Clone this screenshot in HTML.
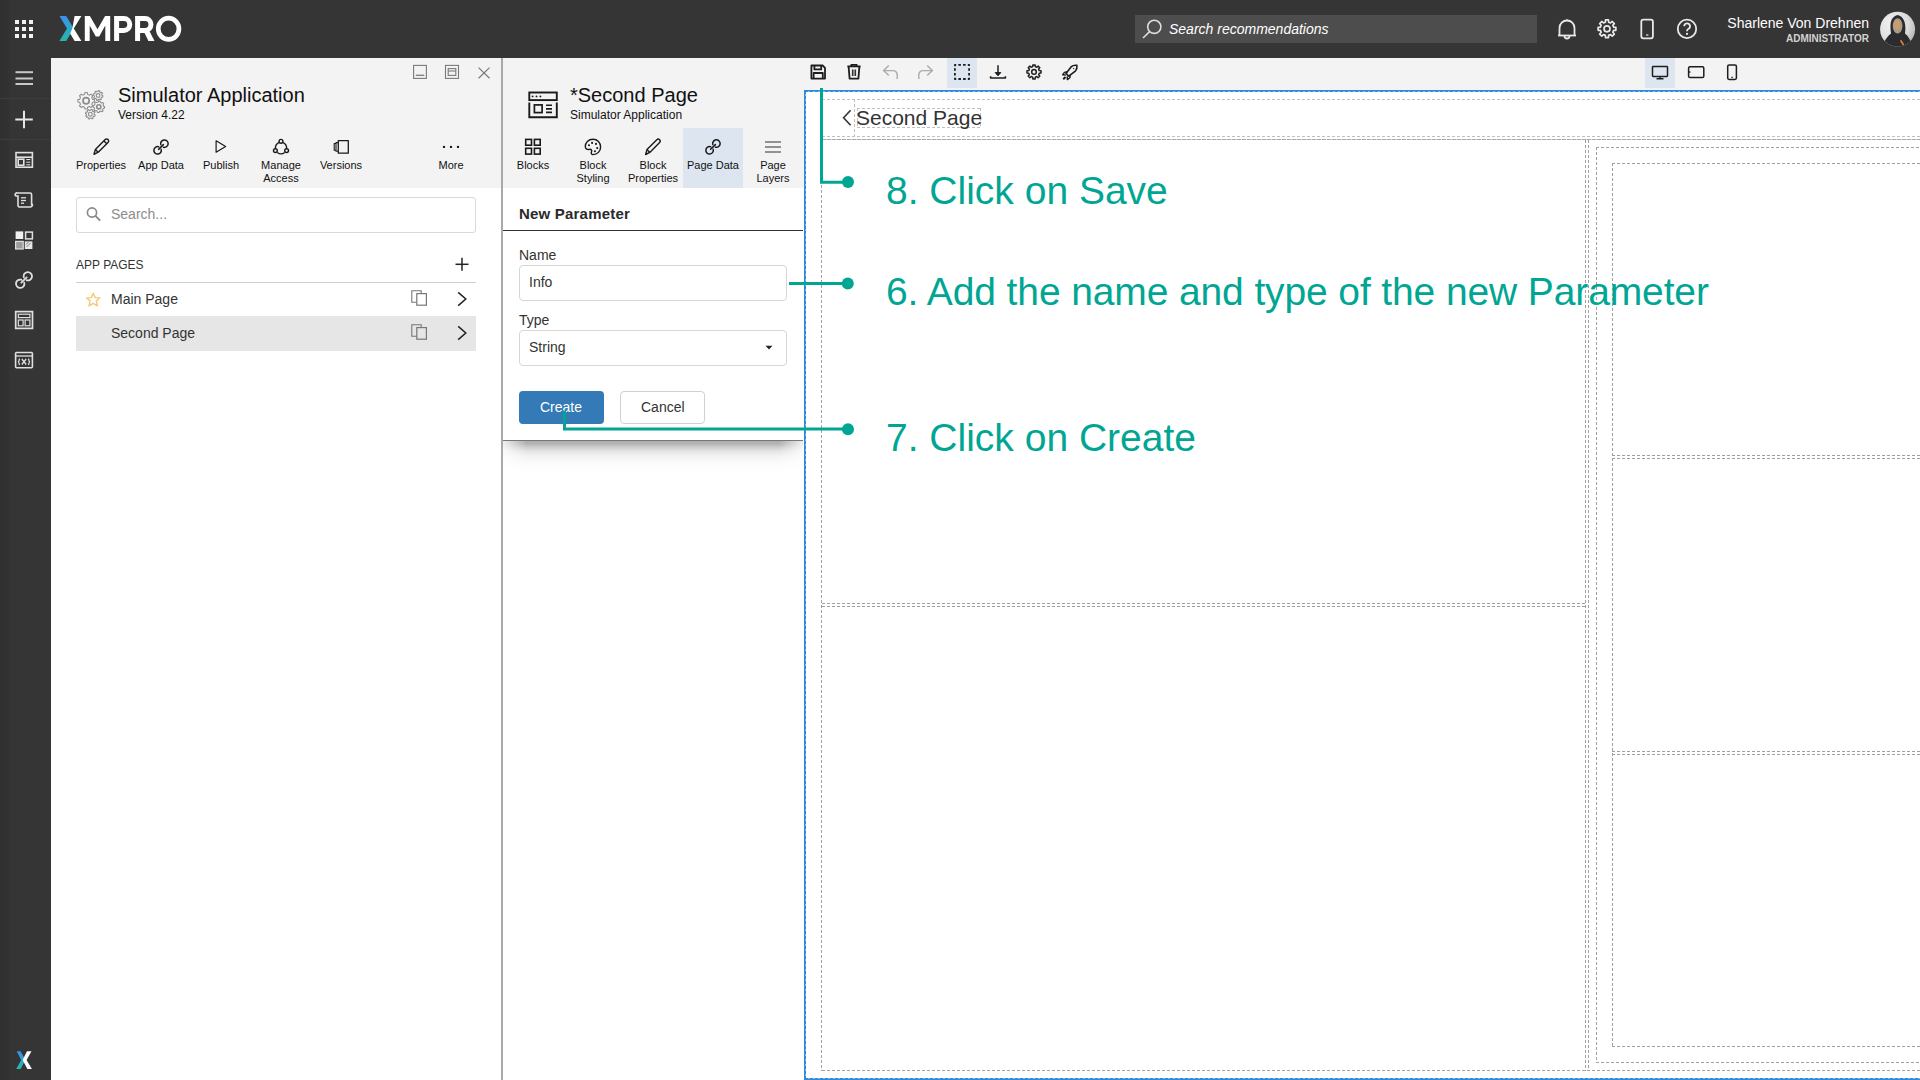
<!DOCTYPE html>
<html><head><meta charset="utf-8">
<style>
*{box-sizing:border-box;margin:0;padding:0}
html,body{width:1920px;height:1080px;overflow:hidden;background:#fff;font-family:"Liberation Sans",sans-serif;color:#222}
.a{position:absolute;white-space:nowrap}
#top{left:0;top:0;width:1920px;height:58px;background:#353535}
#side{left:0;top:58px;width:51px;height:1022px;background:#353535}
#p1h{left:51px;top:58px;width:450px;height:130px;background:#f3f3f3}
#p2h{left:503px;top:58px;width:301px;height:130px;background:#f3f3f3}
#sep{left:501px;top:58px;width:2px;height:1022px;background:#a9a9a9}
#tb{left:803px;top:58px;width:1117px;height:32px;background:#f3f3f3}
.lbl{font-size:11px;color:#111;text-align:center;width:60px;line-height:13px}
.ann{font-size:39px;color:#00a693;line-height:45px}
.dh{height:1px;background:repeating-linear-gradient(to right,#c0c0c0 0 3px,transparent 3px 5px)}
.dv{width:1px;background:repeating-linear-gradient(to bottom,#c0c0c0 0 3px,transparent 3px 5px)}
.dk.dh{background:repeating-linear-gradient(to right,#a0a0a0 0 3px,transparent 3px 5px)}
.dk.dv{background:repeating-linear-gradient(to bottom,#a0a0a0 0 3px,transparent 3px 5px)}
</style></head>
<body>
<div class="a" id="top"></div>
<div class="a" id="side"></div>
<div class="a" style="left:0;top:0;width:12px;height:1080px;background:linear-gradient(to right,rgba(0,0,0,.09) 0,rgba(0,0,0,.09) 6px,rgba(0,0,0,0) 12px)"></div>
<div class="a" style="left:0;top:98px;width:51px;height:1px;background:#3b3b44"></div>
<div class="a" style="left:0;top:139px;width:51px;height:1px;background:#3b3b44"></div>
<div class="a" id="p1h"></div>
<div class="a" id="p2h"></div>
<div class="a" id="sep"></div>
<div class="a" id="tb"></div>

<!-- ===== panel1 header text ===== -->
<div class="a" style="left:118px;top:84px;font-size:20px;color:#111">Simulator Application</div>
<div class="a" style="left:118px;top:108px;font-size:12px;color:#111">Version 4.22</div>

<div class="a lbl" style="left:71px;top:159px">Properties</div>
<div class="a lbl" style="left:131px;top:159px">App Data</div>
<div class="a lbl" style="left:191px;top:159px">Publish</div>
<div class="a lbl" style="left:251px;top:159px">Manage<br>Access</div>
<div class="a lbl" style="left:311px;top:159px">Versions</div>
<div class="a lbl" style="left:421px;top:159px">More</div>

<!-- search -->
<div class="a" style="left:76px;top:197px;width:400px;height:36px;border:1px solid #d9d9d9;border-radius:3px;background:#fff"></div>
<div class="a" style="left:111px;top:206px;font-size:14px;color:#8c8c8c">Search...</div>
<div class="a" style="left:76px;top:258px;font-size:12px;color:#333">APP PAGES</div>
<div class="a" style="left:76px;top:282px;width:400px;height:1px;background:#cfcfcf"></div>
<div class="a" style="left:76px;top:316px;width:400px;height:35px;background:#e6e6e6"></div>
<div class="a" style="left:111px;top:291px;font-size:14px;color:#333">Main Page</div>
<div class="a" style="left:111px;top:325px;font-size:14px;color:#333">Second Page</div>

<!-- ===== panel2 header ===== -->
<div class="a" style="left:570px;top:84px;font-size:20px;color:#111">*Second Page</div>
<div class="a" style="left:570px;top:108px;font-size:12px;color:#111">Simulator Application</div>
<div class="a" style="left:683px;top:128px;width:60px;height:60px;background:#dde6f0"></div>
<div class="a lbl" style="left:503px;top:159px">Blocks</div>
<div class="a lbl" style="left:563px;top:159px">Block<br>Styling</div>
<div class="a lbl" style="left:623px;top:159px">Block<br>Properties</div>
<div class="a lbl" style="left:683px;top:159px">Page Data</div>
<div class="a lbl" style="left:743px;top:159px">Page<br>Layers</div>

<!-- ===== form ===== -->
<div class="a" style="left:503px;top:441px;width:300px;height:30px;background:linear-gradient(to bottom,rgba(0,0,0,.32) 0,rgba(0,0,0,.29) 3px,rgba(0,0,0,.2) 6px,rgba(0,0,0,.11) 10px,rgba(0,0,0,.05) 15px,rgba(0,0,0,.015) 22px,rgba(0,0,0,0) 30px);-webkit-mask-image:linear-gradient(to right,rgba(0,0,0,.2),#000 24px,#000 276px,rgba(0,0,0,.2))"></div>
<div class="a" style="left:503px;top:440px;width:300px;height:1px;background:#777"></div>
<div class="a" style="left:519px;top:205px;font-size:15px;font-weight:bold;color:#2a2a2a;letter-spacing:.2px">New Parameter</div>
<div class="a" style="left:503px;top:230px;width:300px;height:1px;background:#333"></div>
<div class="a" style="left:519px;top:247px;font-size:14px;color:#333">Name</div>
<div class="a" style="left:519px;top:265px;width:268px;height:36px;border:1px solid #d6d6d6;border-radius:4px"></div>
<div class="a" style="left:529px;top:274px;font-size:14px;color:#333">Info</div>
<div class="a" style="left:519px;top:312px;font-size:14px;color:#333">Type</div>
<div class="a" style="left:519px;top:330px;width:268px;height:36px;border:1px solid #d6d6d6;border-radius:4px"></div>
<div class="a" style="left:529px;top:339px;font-size:14px;color:#333">String</div>
<div class="a" style="left:519px;top:391px;width:85px;height:33px;background:#337ab7;border-radius:4px"></div>
<div class="a" style="left:540px;top:399px;font-size:14px;color:#fff">Create</div>
<div class="a" style="left:620px;top:391px;width:85px;height:33px;border:1px solid #d0d0d0;border-radius:4px"></div>
<div class="a" style="left:641px;top:399px;font-size:14px;color:#333">Cancel</div>

<!-- ===== canvas ===== -->
<div class="a" style="left:804px;top:90px;width:1116px;height:990px;border-left:1px solid #2b8ae4;border-top:1px solid #2b8ae4;border-bottom:1px solid #2b8ae4"></div>
<div class="a" style="left:805px;top:91px;width:1115px;height:1px;background:repeating-linear-gradient(to right,#2b8ae4 0 3px,#8cb6dd 3px 5px)"></div>
<div class="a" style="left:805px;top:91px;width:1px;height:987px;background:repeating-linear-gradient(to bottom,#2b8ae4 0 3px,#8cb6dd 3px 5px)"></div>
<div class="a" style="left:805px;top:1078px;width:1115px;height:1px;background:repeating-linear-gradient(to right,#2b8ae4 0 3px,#8cb6dd 3px 5px)"></div>

<div class="a dh" style="left:822px;top:99px;width:1098px"></div>
<div class="a dh" style="left:822px;top:136px;width:1098px"></div>
<div class="a dv" style="left:854px;top:99px;height:38px"></div>
<div class="a dh" style="left:857px;top:108px;width:124px"></div>
<div class="a dh" style="left:857px;top:127px;width:124px"></div>
<div class="a dv" style="left:857px;top:108px;height:20px"></div>
<div class="a dv" style="left:980px;top:108px;height:20px"></div>
<div class="a" style="left:822px;top:139px;width:1098px;height:1px;background:repeating-linear-gradient(to right,#aaa 0 4px,#e2e2e2 4px 5px)"></div>
<div class="a dk dv" style="left:821px;top:140px;height:931px"></div>
<div class="a dk dh" style="left:822px;top:603px;width:763px"></div>
<div class="a dk dh" style="left:822px;top:606px;width:763px"></div>
<div class="a dk dh" style="left:822px;top:1070px;width:1098px"></div>
<div class="a dk dv" style="left:1585px;top:140px;height:931px"></div>
<div class="a dk dv" style="left:1588px;top:140px;height:931px"></div>
<div class="a dk dv" style="left:1596px;top:147px;height:916px"></div>
<div class="a dk dh" style="left:1596px;top:147px;width:324px"></div>
<div class="a dk dh" style="left:1596px;top:1062px;width:324px"></div>
<div class="a dk dv" style="left:1612px;top:163px;height:884px"></div>
<div class="a dk dh" style="left:1612px;top:163px;width:308px"></div>
<div class="a dk dh" style="left:1612px;top:455px;width:308px"></div>
<div class="a dk dh" style="left:1612px;top:458px;width:308px"></div>
<div class="a dk dh" style="left:1612px;top:751px;width:308px"></div>
<div class="a dk dh" style="left:1612px;top:754px;width:308px"></div>
<div class="a dk dh" style="left:1612px;top:1046px;width:308px"></div>

<div class="a" style="left:856px;top:106px;font-size:21px;color:#333">Second Page</div>

<!-- ===== annotations ===== -->
<div class="a ann" style="left:886px;top:168px">8. Click on Save</div>
<div class="a ann" style="left:886px;top:269px;letter-spacing:-.12px">6. Add the name and type of the new Parameter</div>
<div class="a ann" style="left:886px;top:415px">7. Click on Create</div>

<!-- ===== top bar ===== -->
<div class="a" style="left:1135px;top:15px;width:402px;height:28px;background:#4d4d4d"></div>
<div class="a" style="left:1169px;top:21px;font-size:14px;font-style:italic;color:#fff">Search recommendations</div>
<div class="a" style="right:51px;top:15px;font-size:14px;color:#fff">Sharlene Von Drehnen</div>
<div class="a" style="right:51px;top:33px;font-size:10px;font-weight:bold;color:#d2d2d2">ADMINISTRATOR</div>

<!-- ===== icons & lines overlay ===== -->
<svg class="a" style="left:0;top:0" width="1920" height="1080" viewBox="0 0 1920 1080" fill="none">
 <!-- grid -->
 <g fill="#f2f2f2">
  <rect x="15" y="20" width="4" height="4"/><rect x="22" y="20" width="4" height="4"/><rect x="29" y="20" width="4" height="4"/>
  <rect x="15" y="27" width="4" height="4"/><rect x="22" y="27" width="4" height="4"/><rect x="29" y="27" width="4" height="4"/>
  <rect x="15" y="34" width="4" height="4"/><rect x="22" y="34" width="4" height="4"/><rect x="29" y="34" width="4" height="4"/>
 </g>
 <!-- logo -->
 <defs>
  <linearGradient id="xg" x1="0" y1="0" x2="0" y2="1">
   <stop offset="0" stop-color="#3d8fe9"/><stop offset=".55" stop-color="#2aa9c8"/><stop offset="1" stop-color="#27b7a6"/>
  </linearGradient>
 </defs>
 <polygon points="59.4,16.1 66.2,16.1 73.8,28.6 66.2,41.1 59.4,41.1 67,28.6" fill="url(#xg)"/>
 <polygon points="74.6,16.1 81.4,16.1 73.8,28.6 81.4,41.1 74.6,41.1 70.2,33.5 72.3,28.6" fill="#fff"/>
 <polygon points="84.8,41.1 84.8,16.1 89.9,16.1 97.5,29.2 105.1,16.1 110.2,16.1 110.2,41.1 105.3,41.1 105.3,25.5 99.2,36.6 95.8,36.6 89.7,25.5 89.7,41.1" fill="#fff"/>
 <path d="M116.6,41.1 V18.6 H123.8 A5.95,5.95 0 0 1 123.8,30.5 H116.6" stroke="#fff" stroke-width="5"/>
 <path d="M137.6,41.1 V18.6 H145 A5.95,5.95 0 0 1 145,30.5 H137.6" stroke="#fff" stroke-width="5"/>
 <polygon points="143.6,31 149.4,31 154.5,41.1 148.4,41.1" fill="#fff"/>
 <ellipse cx="168.6" cy="28.8" rx="10.35" ry="10.65" stroke="#fff" stroke-width="4.7"/>

 <!-- search magnifier -->
 <circle cx="1154.3" cy="26.8" r="6.6" stroke="#ddd" stroke-width="1.6"/>
 <line x1="1149.6" y1="31.6" x2="1143" y2="38" stroke="#ddd" stroke-width="1.6"/>

 <!-- bell -->
 <g stroke="#e8e8e8" stroke-width="1.8">
  <path d="M1558,35.5 H1576"/>
  <path d="M1559.5,35.5 V28 A7.5,7.5 0 0 1 1574.5,28 V35.5"/>
  <path d="M1564.5,36 A2.5,2.5 0 0 0 1569.5,36"/>
  <line x1="1567" y1="19.5" x2="1567" y2="21"/>
 </g>
 <!-- gear top -->
 <g stroke="#e8e8e8" stroke-width="1.8">
  <path d="M1605.36,22.20 L1605.52,19.92 L1608.48,19.92 L1608.64,22.20 L1610.51,22.97 L1612.23,21.48 L1614.32,23.57 L1612.83,25.29 L1613.60,27.16 L1615.88,27.32 L1615.88,30.28 L1613.60,30.44 L1612.83,32.31 L1614.32,34.03 L1612.23,36.12 L1610.51,34.63 L1608.64,35.40 L1608.48,37.68 L1605.52,37.68 L1605.36,35.40 L1603.49,34.63 L1601.77,36.12 L1599.68,34.03 L1601.17,32.31 L1600.40,30.44 L1598.12,30.28 L1598.12,27.32 L1600.40,27.16 L1601.17,25.29 L1599.68,23.57 L1601.77,21.48 L1603.49,22.97 Z" stroke-linejoin="round" stroke-width="1.7"/>
  <circle cx="1607" cy="28.8" r="3" stroke-width="1.7"/>
 </g>
 <!-- phone top -->
 <rect x="1641.3" y="19.7" width="11.6" height="18.6" rx="2" stroke="#e8e8e8" stroke-width="1.8"/>
 <line x1="1646" y1="35" x2="1648.4" y2="35" stroke="#e8e8e8" stroke-width="1.2"/>
 <!-- help -->
 <circle cx="1687" cy="28.9" r="9.2" stroke="#e8e8e8" stroke-width="1.8"/>
 <path d="M1684.2,26.3 A2.9,2.9 0 1 1 1688.2,29 C1687.3,29.5 1687,30 1687,31.3" stroke="#e8e8e8" stroke-width="1.8"/>
 <circle cx="1687" cy="33.9" r="1.1" fill="#e8e8e8"/>
 <!-- avatar -->
 <defs>
  <radialGradient id="avbg" cx=".3" cy=".35" r=".85"><stop offset="0" stop-color="#f0f0f0"/><stop offset=".6" stop-color="#dcdcdc"/><stop offset="1" stop-color="#a8a8a8"/></radialGradient>
  <clipPath id="avc"><circle cx="1897.6" cy="29.2" r="17.5"/></clipPath>
 </defs>
 <circle cx="1897.6" cy="29.2" r="17.5" fill="url(#avbg)"/>
 <g clip-path="url(#avc)">
  <path d="M1882,48 C1884,40 1888,36 1891,33.5 C1890,26 1889.5,17 1897.5,15 C1905.5,17 1906,26 1905,33.5 C1908,36 1911,40 1913,48 Z" fill="#2c2c30"/>
  <ellipse cx="1897.6" cy="25.8" rx="4.9" ry="7.6" fill="#a99a8a"/>
  <ellipse cx="1897.3" cy="25" rx="3.2" ry="5" fill="#d2a060" opacity=".75"/>
  <line x1="1900.6" y1="40.2" x2="1903.6" y2="45" stroke="#d8822e" stroke-width="1.7"/>
 </g>

 <!-- sidebar -->
 <g stroke="#e6e6e6" stroke-width="2">
  <line x1="15.5" y1="72.2" x2="33" y2="72.2" stroke="#c8c8c8"/>
  <line x1="15.5" y1="78.5" x2="33" y2="78.5" stroke="#c8c8c8"/>
  <line x1="15.5" y1="84" x2="33" y2="84" stroke="#c8c8c8"/>
  <line x1="15.3" y1="119.5" x2="32.8" y2="119.5"/>
  <line x1="24" y1="110.8" x2="24" y2="128.2"/>
 </g>
 <g stroke="#e0e0e0" stroke-width="1.6">
  <!-- page icon -->
  <rect x="16" y="152.6" width="16.4" height="14.6"/>
  <line x1="16" y1="157.2" x2="32.4" y2="157.2"/>
  <rect x="18.2" y="159.2" width="5.6" height="6"/>
  <line x1="26.3" y1="159.5" x2="30.2" y2="159.5" stroke-width="1"/>
  <line x1="26.3" y1="162.2" x2="30.2" y2="162.2" stroke-width="1"/>
  <line x1="26.3" y1="164.8" x2="30.2" y2="164.8" stroke-width="1"/>
  <!-- scroll icon -->
  <path d="M17.5,193 H30 A1.6,1.6 0 0 1 31.6,194.6 V204.5 H32.4 A2.2,2.2 0 0 1 30.2,207 H19.5 A1.5,1.5 0 0 1 18,205.5 V196 H16.2 A1.5,1.5 0 0 1 17.5,193 Z"/>
  <line x1="21" y1="200.5" x2="26" y2="200.5" stroke-width="1.3"/>
  <line x1="21" y1="203.2" x2="24" y2="203.2" stroke-width="1.3"/>
  <line x1="21" y1="197.8" x2="26" y2="197.8" stroke-width="1.3"/>
  <!-- link -->
  <path d="M23.78,277.37 A4.20,4.20 0 1 1 26.69,280.28 M24.22,282.63 A4.20,4.20 0 1 1 21.31,279.72 M21.31,282.63 L26.69,277.37" stroke-width="1.8" stroke-linecap="round"/>
  <!-- layout -->
  <rect x="15.7" y="311.6" width="16.8" height="16.8" stroke-width="1.7"/>
  <rect x="18.3" y="314.2" width="11.6" height="3.4" stroke-width="1.2"/>
  <rect x="18.3" y="320" width="4.8" height="5.8" stroke-width="1.2"/>
  <rect x="25.1" y="320" width="4.8" height="5.8" stroke-width="1.2"/>
  <!-- (x) window -->
  <rect x="15.6" y="352.5" width="16.8" height="15.2" rx="1" stroke-width="1.6"/>
  <line x1="15.6" y1="356" x2="32.4" y2="356" stroke-width="1.3"/>
  <path d="M19.5,358.5 C18.5,360.5 18.5,363 19.5,365 M28.5,358.5 C29.5,360.5 29.5,363 28.5,365 M21.8,359 L26.2,364.5 M26.2,359 L21.8,364.5" stroke-width="1.3"/>
 </g>
 <!-- 4 squares -->
 <rect x="15.6" y="231.4" width="7.6" height="7.6" fill="#f0f0f0"/>
 <rect x="25.6" y="232.1" width="6.8" height="6.8" stroke="#e0e0e0" stroke-width="1.5"/>
 <rect x="15.6" y="241.4" width="7.6" height="7.6" fill="#9c9c9c" stroke="#e0e0e0" stroke-width="1.2"/>
 <rect x="24.8" y="241.4" width="7.6" height="7.6" fill="#e8e8e8"/>
 <path d="M26.5,247 l4,-4 M26,244.5 l2.5,-2.5" stroke="#777" stroke-width="1"/>
 <!-- bottom X -->
 <polygon points="16.7,1051.3 20.6,1051.3 25.4,1059.9 20.6,1068.9 16.2,1068.9 21.2,1059.9" fill="url(#xg)"/>
 <polygon points="27,1051.3 31.5,1051.3 26.6,1059.9 31.9,1068.9 27.4,1068.9 22.6,1059.9" fill="#fff"/>

 <!-- ===== panel1 icons ===== -->
 <g stroke="#7a7a7a" stroke-width="1.1">
  <rect x="413.6" y="65.4" width="12.8" height="13"/>
  <line x1="415.8" y1="75.3" x2="424.3" y2="75.3" stroke-width="1.3"/>
  <rect x="445.5" y="65.4" width="13" height="13"/>
  <rect x="448.2" y="68.6" width="7.6" height="6.8"/>
  <line x1="448.2" y1="71" x2="455.8" y2="71"/>
  <line x1="478.6" y1="67.6" x2="489.5" y2="78.3" stroke-width="1.2"/>
  <line x1="489.5" y1="67.6" x2="478.6" y2="78.3" stroke-width="1.2"/>
 </g>
 <!-- gears -->
 <g stroke="#8c8c8c" stroke-width="1.05" fill="none" stroke-linejoin="round">
  <path d="M84.56,94.38 L84.93,92.58 L87.27,92.58 L87.64,94.38 L89.55,95.17 L91.08,94.16 L92.74,95.82 L91.73,97.35 L92.52,99.26 L94.32,99.63 L94.32,101.97 L92.52,102.34 L91.73,104.25 L92.74,105.78 L91.08,107.44 L89.55,106.43 L87.64,107.22 L87.27,109.02 L84.93,109.02 L84.56,107.22 L82.65,106.43 L81.12,107.44 L79.46,105.78 L80.47,104.25 L79.68,102.34 L77.88,101.97 L77.88,99.63 L79.68,99.26 L80.47,97.35 L79.46,95.82 L81.12,94.16 L82.65,95.17 Z"/>
  <circle cx="86.1" cy="100.8" r="3.1" stroke-width="1.7"/>
  <path d="M97.96,91.60 L98.39,90.61 L99.74,90.88 L99.75,91.96 L100.76,92.65 L101.76,92.24 L102.52,93.40 L101.76,94.16 L102.00,95.36 L102.99,95.79 L102.72,97.14 L101.64,97.15 L100.95,98.16 L101.36,99.16 L100.20,99.92 L99.44,99.16 L98.24,99.40 L97.81,100.39 L96.46,100.12 L96.45,99.04 L95.44,98.35 L94.44,98.76 L93.68,97.60 L94.44,96.84 L94.20,95.64 L93.21,95.21 L93.48,93.86 L94.56,93.85 L95.25,92.84 L94.84,91.84 L96.00,91.08 L96.76,91.84 Z"/>
  <circle cx="98.1" cy="95.5" r="1.9" stroke-width="1.1"/>
  <path d="M98.16,102.14 L98.56,101.00 L100.19,101.17 L100.35,102.36 L101.64,103.06 L102.73,102.53 L103.76,103.80 L103.03,104.76 L103.46,106.16 L104.60,106.56 L104.43,108.19 L103.24,108.35 L102.54,109.64 L103.07,110.73 L101.80,111.76 L100.84,111.03 L99.44,111.46 L99.04,112.60 L97.41,112.43 L97.25,111.24 L95.96,110.54 L94.87,111.07 L93.84,109.80 L94.57,108.84 L94.14,107.44 L93.00,107.04 L93.17,105.41 L94.36,105.25 L95.06,103.96 L94.53,102.87 L95.80,101.84 L96.76,102.57 Z"/>
  <circle cx="98.8" cy="106.8" r="2.1" stroke-width="1.6"/>
  <path d="M90.55,110.31 L91.07,109.36 L92.39,109.77 L92.29,110.85 L93.23,111.63 L94.27,111.33 L94.91,112.55 L94.08,113.24 L94.19,114.45 L95.14,114.97 L94.73,116.29 L93.65,116.19 L92.87,117.13 L93.17,118.17 L91.95,118.81 L91.26,117.98 L90.05,118.09 L89.53,119.04 L88.21,118.63 L88.31,117.55 L87.37,116.77 L86.33,117.07 L85.69,115.85 L86.52,115.16 L86.41,113.95 L85.46,113.43 L85.87,112.11 L86.95,112.21 L87.73,111.27 L87.43,110.23 L88.65,109.59 L89.34,110.42 Z"/>
  <circle cx="90.3" cy="114.2" r="1.9" stroke-width="1.1"/>
 </g>
 <g stroke="#1a1a1a" stroke-width="1.4" fill="none" stroke-linejoin="round">
  <!-- pencil -->
  <path d="M94,154.3 L95.4,149.4 L105.2,139.6 A1.9,1.9 0 0 1 108,142.4 L98.2,152.2 Z"/>
  <line x1="95.4" y1="149.4" x2="98.2" y2="152.2"/>
  <line x1="104" y1="140.9" x2="106.8" y2="143.7"/>
  <!-- link -->
  <path d="M160.80,144.65 A3.75,3.75 0 1 1 163.40,147.25 M161.20,149.35 A3.75,3.75 0 1 1 158.60,146.75 M158.60,149.35 L163.40,144.65" stroke-width="1.5" stroke-linecap="round"/>
  <!-- publish -->
  <path d="M216.1,140.8 V152.2 L225.6,146.5 Z" stroke-width="1.2"/>
  <!-- manage access -->
  <path d="M279.3,142.3 A6.2,6.2 0 0 0 275.4,148.6 M282.7,142.3 A6.2,6.2 0 0 1 286.6,148.6 M277.3,152.5 A6.2,6.2 0 0 0 284.7,152.5"/>
  <circle cx="281" cy="141.3" r="1.9"/>
  <circle cx="275.4" cy="150.6" r="1.9"/>
  <circle cx="286.6" cy="150.6" r="1.9"/>
  <!-- versions -->
  <rect x="338.3" y="140.6" width="10" height="12.6" stroke-width="1.3"/>
  <path d="M338.3,142.6 H336 V151.2 H338.3 M336,143.5 H334.2 V150.3 H336" stroke-width="1.1"/>
 </g>
 <g fill="#1a1a1a">
  <circle cx="444" cy="146.9" r="1.2"/><circle cx="451" cy="146.9" r="1.2"/><circle cx="458" cy="146.9" r="1.2"/>
 </g>
 <!-- search magnifier (panel) -->
 <circle cx="92" cy="212.5" r="4.6" stroke="#888" stroke-width="1.6"/>
 <line x1="95.4" y1="215.9" x2="100.2" y2="220.6" stroke="#888" stroke-width="1.9"/>
 <!-- app pages plus -->
 <line x1="455.5" y1="264.3" x2="468.5" y2="264.3" stroke="#222" stroke-width="1.5"/>
 <line x1="462" y1="257.8" x2="462" y2="270.8" stroke="#222" stroke-width="1.5"/>
 <!-- star -->
 <path d="M93.2,293.2 L95.2,297.6 L99.8,298 L96.3,301.1 L97.4,305.8 L93.2,303.3 L89,305.8 L90.1,301.1 L86.6,298 L91.2,297.6 Z" stroke="#f5c874" stroke-width="1.4" stroke-linejoin="round"/>
 <!-- copy icons -->
 <g stroke="#777" stroke-width="1.1">
  <path d="M421.2,293.4 V290.8 H411.8 V302.2 H416.6"/>
  <rect x="416.8" y="293.6" width="9.6" height="11.6" stroke-width="1.2"/>
  <path d="M421.2,327.4 V324.8 H411.8 V336.2 H416.6"/>
  <rect x="416.8" y="327.6" width="9.6" height="11.6" stroke-width="1.2"/>
 </g>
 <!-- chevrons -->
 <path d="M458.2,292.4 L465.8,299 L458.2,305.6" stroke="#222" stroke-width="1.5"/>
 <path d="M458.2,326.4 L465.8,333 L458.2,339.6" stroke="#222" stroke-width="1.5"/>

 <!-- ===== panel2 icons ===== -->
 <g stroke="#1a1a1a" stroke-width="1.6" fill="none">
  <!-- page icon -->
  <rect x="529.3" y="92.5" width="27.5" height="7.6" stroke-width="1.9"/>
  <path d="M529.3,102.6 V117.3 H556.8 V102.6" stroke-width="1.9"/>
  <rect x="534.4" y="104.9" width="7.7" height="7.7" stroke-width="1.7"/>
  <path d="M546,105.3 H552 M546,108.9 H552 M546,112.4 H552" stroke-width="1.6"/>
 </g>
 <g fill="#1a1a1a">
  <circle cx="532.6" cy="96.4" r="0.95"/><circle cx="536.5" cy="96.4" r="0.95"/><circle cx="540.4" cy="96.4" r="0.95"/>
 </g>
 <g stroke="#1a1a1a" stroke-width="1.6" fill="none">
  <!-- blocks -->
  <rect x="525.7" y="139.4" width="5.8" height="5.8"/>
  <rect x="534.4" y="139.4" width="5.8" height="5.8"/>
  <rect x="525.7" y="148.3" width="5.8" height="5.8"/>
  <rect x="534.4" y="148.3" width="5.8" height="5.8"/>
 </g>
 <g stroke="#1a1a1a" stroke-width="1.4" fill="none" stroke-linejoin="round">
  <!-- palette -->
  <path d="M593,139.3 C588.2,139.3 585.3,142.8 585.3,146.6 C585.3,149.2 587.4,149.9 589.4,149.4 C591.2,149 592.3,150.4 591.5,151.9 C590.8,153.3 591.5,154.6 593,154.6 C597.4,154.6 600.6,151.2 600.6,147 C600.6,142.7 597.4,139.3 593,139.3 Z"/>
 </g>
 <g fill="#1a1a1a">
  <circle cx="589" cy="145.2" r="1.05"/><circle cx="592.1" cy="142.9" r="1.05"/><circle cx="596" cy="143.9" r="1.05"/><circle cx="597.2" cy="148.1" r="1.05"/><circle cx="594.9" cy="151.2" r="1.05"/>
 </g>
 <g stroke="#1a1a1a" stroke-width="1.4" fill="none" stroke-linejoin="round">
  <path d="M645.6,154.5 L647,149.6 L656.8,139.8 A1.9,1.9 0 0 1 659.6,142.6 L649.8,152.4 Z"/>
  <line x1="647" y1="149.6" x2="649.8" y2="152.4"/>
  <path d="M712.80,144.60 A3.75,3.75 0 1 1 715.40,147.20 M713.20,149.30 A3.75,3.75 0 1 1 710.60,146.70 M710.60,149.30 L715.40,144.60" stroke-width="1.5" stroke-linecap="round"/>
 </g>
 <g stroke="#666" stroke-width="1.4">
  <line x1="765" y1="142" x2="781" y2="142"/>
  <line x1="765" y1="147" x2="781" y2="147"/>
  <line x1="765" y1="152" x2="781" y2="152"/>
 </g>
 <!-- select caret -->
 <path d="M765.5,345.8 H772.5 L769,349.5 Z" fill="#222"/>

 <!-- ===== toolbar ===== -->
 <rect x="947" y="58" width="30" height="30" fill="#dde6f0"/>
 <rect x="1645" y="58" width="30" height="30" fill="#dde6f0"/>
 <g stroke="#1e1e1e" stroke-width="1.8" fill="none" stroke-linejoin="round">
  <path d="M811.4,65.5 H822.6 L825,67.9 V78.6 H811.4 Z"/>
  <path d="M814.4,65.5 V69.4 H821.2 V65.5"/>
  <path d="M813.6,78.6 V73 H822.8 V78.6"/>
  <!-- trash -->
  <path d="M847.4,66.4 H860.6"/>
  <path d="M851.3,66.2 V64.8 H856.7 V66.2"/>
  <path d="M848.6,66.4 L849.6,78.6 H858.4 L859.4,66.4"/>
  <path d="M852.4,69.5 V76 M854,69.5 V76 M855.6,69.5 V76" stroke-width="1"/>
  <!-- dashed select -->
  <rect x="954.9" y="64.8" width="14.2" height="14.2" stroke-dasharray="2.6 2.13" stroke-dashoffset="1.3"/>
  <!-- download -->
  <path d="M998,65.2 V75" stroke-width="1.5"/>
  <path d="M995.2,72.6 L998,75.8 L1000.8,72.6 Z" fill="#1e1e1e" stroke-width="1"/>
  <path d="M990.6,76.2 V78 H1005.4 V76.2" stroke-width="1.6"/>
  <!-- rocket -->
  <path d="M1066,73.4 L1071.4,66.6 C1072.6,65.5 1075,65.1 1076.9,65.3 C1077.1,67.2 1076.7,69.6 1075.6,70.8 L1068.8,76.2 Z" stroke-width="1.6"/>
  <path d="M1067.4,71.8 L1064.4,72.4 L1062.6,74.8 L1065.8,75" stroke-width="1.4"/>
  <path d="M1070.4,74.8 L1069.8,77.8 L1067.4,79.6 L1067.2,76.4" stroke-width="1.4"/>
  <path d="M1065.6,77 L1063.2,79.2" stroke-width="2"/>
  <circle cx="1073.6" cy="68.6" r="0.7" fill="#1e1e1e" stroke="none"/>
 </g>
 <g stroke="#1e1e1e" stroke-width="1.8" stroke-linejoin="round">
  <path d="M1032.70,66.66 L1032.83,64.90 L1035.17,64.90 L1035.30,66.66 L1036.79,67.27 L1038.13,66.12 L1039.78,67.77 L1038.63,69.11 L1039.24,70.60 L1041.00,70.73 L1041.00,73.07 L1039.24,73.20 L1038.63,74.69 L1039.78,76.03 L1038.13,77.68 L1036.79,76.53 L1035.30,77.14 L1035.17,78.90 L1032.83,78.90 L1032.70,77.14 L1031.21,76.53 L1029.87,77.68 L1028.22,76.03 L1029.37,74.69 L1028.76,73.20 L1027.00,73.07 L1027.00,70.73 L1028.76,70.60 L1029.37,69.11 L1028.22,67.77 L1029.87,66.12 L1031.21,67.27 Z" stroke-width="1.5"/>
  <circle cx="1034" cy="71.9" r="2.3" stroke-width="1.5"/>
 </g>
 <g stroke="#aaa" stroke-width="1.4" fill="none">
  <path d="M884,70.6 H893 A4.2,4.2 0 0 1 897.2,74.8 V79"/>
  <path d="M888.8,65.6 L883.6,70.6 L888.8,75.6"/>
  <path d="M932,70.6 H923 A4.2,4.2 0 0 0 918.8,74.8 V79"/>
  <path d="M927.2,65.6 L932.4,70.6 L927.2,75.6"/>
 </g>
 <!-- devices -->
 <g stroke="#1e1e1e" stroke-width="1.5" fill="none">
  <rect x="1652.5" y="66.4" width="15" height="10" rx="0.6"/>
  <path d="M1660,76.6 V78.6 M1656.5,78.8 H1663.5"/>
  <rect x="1688.6" y="66.8" width="15.2" height="10.8" rx="1.4"/>
  <rect x="1727.7" y="64.9" width="8.7" height="14.6" rx="1.4"/>
 </g>
 <line x1="1689.8" y1="71" x2="1689.8" y2="73" stroke="#1e1e1e" stroke-width="1"/>
 <line x1="1731.4" y1="77.3" x2="1732.8" y2="77.3" stroke="#1e1e1e" stroke-width="1.2"/>

 <!-- canvas back chevron -->
 <path d="M850.6,110.2 L843.6,117.7 L850.6,125.2" stroke="#333" stroke-width="1.6"/>

 <!-- ===== annotation lines ===== -->
 <g stroke="#00a693" stroke-width="3" fill="none">
  <path d="M821.5,88 V182.2 H848"/>
  <path d="M789,283.5 H848"/>
  <path d="M564.5,410.5 V429 H848"/>
 </g>
 <g fill="#00a693">
  <circle cx="848" cy="182" r="6"/>
  <circle cx="847.8" cy="283.5" r="6"/>
  <circle cx="848" cy="429.2" r="6"/>
 </g>
</svg>
</body></html>
